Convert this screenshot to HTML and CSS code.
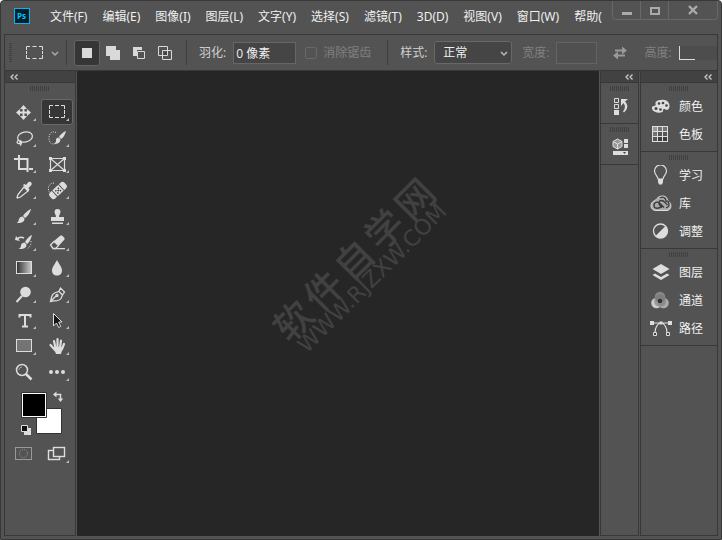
FILE: index.html
```html
<!DOCTYPE html>
<html lang="zh-CN">
<head>
<meta charset="utf-8">
<title>Photoshop</title>
<link rel="stylesheet" href="styles.css">
</head>
<body>
<div class="window">
  <header class="titlebar">
    <svg class="logo" width="16" height="16" viewBox="0 0 16 16"><rect x=".5" y=".5" width="15" height="15" fill="#001d2b" stroke="#00b9f2"/><text class="logo-text" x="3" y="11">Ps</text></svg>
    <nav class="menu">
      <button>文件(F)</button><button>编辑(E)</button><button>图像(I)</button><button>图层(L)</button><button>文字(Y)</button><button>选择(S)</button><button>滤镜(T)</button><button>3D(D)</button><button>视图(V)</button><button>窗口(W)</button><button>帮助(</button>
    </nav>
    <div class="controls">
      <button aria-label="最小化"><svg width="12" height="12" viewBox="0 0 12 12"><path d="M1 9.500h10" stroke="#aaa" stroke-width="3"/></svg></button>
      <button aria-label="最大化"><svg width="12" height="12" viewBox="0 0 12 12"><path d="M2 4h8v6H2z" fill="none" stroke="#aaa" stroke-width="2"/></svg></button>
      <button class="close" aria-label="关闭"><svg width="12" height="12" viewBox="0 0 12 12"><path d="M2 2l8 8M10 2l-8 8" stroke="#aaa" stroke-width="2.400"/></svg></button>
    </div>
  </header>

  <form class="options">
    <span class="grip-v"></span>
    <button type="button" class="preset" aria-label="矩形选框工具"><svg width="34" height="16" viewBox="0 0 34 16" fill="none"><path d="M.5 5V1.500H4M6.500 1.500h4M13 1.500h3.500V5M16.500 6v3M16.500 10v3.500H13M10.500 13.500h-4M4 13.500H.5V10M.5 6v3" stroke="#ddd"/><path d="M26 7l3 3 3-3" stroke="#aaa" stroke-width="1.500"/></svg></button>
    <span class="divider"></span>
    <div class="modes">
      <button type="button" class="mode active" aria-label="新选区"><svg width="16" height="16" viewBox="0 0 16 16"><path d="M3 3h10v10H3z" fill="#d9d9d9"/></svg></button>
      <button type="button" class="mode" aria-label="添加到选区"><svg width="16" height="16" viewBox="0 0 16 16"><path d="M1 1h10v4h4v10H5v-4H1z" fill="#d9d9d9"/></svg></button>
      <button type="button" class="mode" aria-label="从选区减去"><svg width="16" height="16" viewBox="0 0 16 16"><path d="M2 2h9v3H6v6H2z" fill="#d9d9d9"/><path d="M6.500 6.500h7v7h-7z" fill="none" stroke="#d9d9d9"/></svg></button>
      <button type="button" class="mode" aria-label="与选区交叉"><svg width="16" height="16" viewBox="0 0 16 16"><path d="M1.500 1.500h9v9h-9zM5.500 5.500h9v9h-9z" fill="none" stroke="#d9d9d9"/><path d="M7 7h3v3H7z" fill="#444"/></svg></button>
    </div>
    <span class="divider"></span>
    <label class="field feather">羽化:<input type="text" value="0 像素"></label>
    <label class="check off"><input type="checkbox" disabled>消除锯齿</label>
    <span class="divider"></span>
    <label class="field style">样式:<span class="select"><select><option>正常</option></select><svg width="8" height="6" viewBox="0 0 8 6"><path d="M1 1l3 3 3-3" fill="none" stroke="#bbb" stroke-width="1.500"/></svg></span></label>
    <label class="field size off">宽度:<input type="text" disabled></label>
    <button type="button" class="swap" aria-label="高度和宽度互换"><svg width="14" height="14" viewBox="0 0 14 14"><path d="M2 3.500h7V.5l5 4-5 4v-3H2zM12 10.500H5v3l-5-4 5-4v3h7z" fill="#999"/></svg></button>
    <label class="field height off">高度:<input type="text" disabled></label>
  </form>

  <div class="workspace">
    <aside class="panel tools">
      <div class="head left"><svg width="8" height="6" viewBox="0 0 8 6"><path d="M3.500 .5L1 3l2.500 2.500M7.500 .5L5 3l2.500 2.500" fill="none" stroke="#ccc" stroke-width="1.300"/></svg></div>
      <div class="grip"></div>
      <div class="toolgrid">
        <button class="tool" aria-label="移动"><svg viewBox="0 0 32 26"><path d="M15.500 8v11M10 13.500h11" stroke="#ddd" stroke-width="1.800"/><path d="M15.500 6l3.500 4h-7zM15.500 21l3.500-4h-7zM8 13.500l4-3.500v7zM23 13.500l-4-3.500v7z" fill="#ddd"/></svg></button>
        <button class="tool active" aria-label="矩形选框"><svg viewBox="0 0 32 26"><path d="M8.500 10V6.500H12M14 6.500h4M20 6.500h3.500V10M23.500 11v4M23.500 16v2.500H20M18 18.500h-4M12 18.500H8.500V16M8.500 11v4" fill="none" stroke="#ddd"/></svg></button>
        <button class="tool" aria-label="套索"><svg viewBox="0 0 32 26" fill="none" stroke="#ddd" stroke-width="1.300"><ellipse cx="17" cy="12" rx="7.500" ry="5" transform="rotate(-12 17 12)"/><path d="M11 15c-3 1-2 4 0 3.500s2.500-2.500.5-3M13 16c1 2 .5 3-1 4.500"/></svg></button>
        <button class="tool" aria-label="快速选择"><svg viewBox="0 0 32 26"><path d="M15 7.500c-4-2-7 1-7 5.500s2 7 7 5.500" fill="none" stroke="#ddd" stroke-dasharray="1 1.300"/><path d="M25 6c-1 4-3 7-5 8l-2-2c1-2 4-5 7-6zM17.500 12.500l2 2c0 3-3 5-6.500 4 2-1 2-2 2-3.500s1-2.500 2.500-2.500z" fill="#ddd"/></svg></button>
        <button class="tool" aria-label="裁剪"><svg viewBox="0 0 32 26"><path d="M6 8h13.500v9M11 4v14h9M19.500 15v6M21 18h4" fill="none" stroke="#ddd" stroke-width="2"/></svg></button>
        <button class="tool" aria-label="图框"><svg viewBox="0 0 32 26"><path d="M9.500 7.500h14v12h-14zM9.500 7.500l14 12M23.500 7.500l-14 12" fill="none" stroke="#ddd" stroke-width="1.200"/><path d="M8 6h3v3H8zM22 6h3v3h-3zM8 18h3v3H8zM22 18h3v3h-3z" fill="#ddd"/></svg></button>
        <button class="tool" aria-label="吸管"><svg viewBox="0 0 32 26"><path d="M16 10l4 4-7.500 6-3 1-.5-.5 1-3z" fill="#535353" stroke="#ddd" stroke-width="1.300"/><path d="M15 8l1.500-1 1.500 1 2-2.500c1-1 3-.8 3.500.5.600 1 0 2-.8 2.800L20.500 11l1 2-1.500 1.500z" fill="#ddd"/></svg></button>
        <button class="tool" aria-label="修复画笔"><svg viewBox="0 0 32 26"><path d="M13 6c-3 0-6 2-5.500 6 0 1.500.5 3 1.500 4" fill="none" stroke="#ddd" stroke-dasharray="1 1.300"/><g transform="rotate(-43 17 13.500)"><rect x="7" y="9.500" width="20" height="8" rx="2.500" fill="#ddd"/><path d="M12.500 9v9M21.500 9v9" stroke="#535353"/><path d="M14.500 11.500h1.500v1.500h-1.500zM18 11.500h1.500v1.500H18zM16.300 13h1.500v1.500h-1.500zM14.500 14.500h1.500v1.500h-1.500zM18 14.500h1.500v1.500H18z" fill="#444"/></g></svg></button>
        <button class="tool" aria-label="画笔"><svg viewBox="0 0 32 26"><path d="M23 6c-1 4-4 8-6 9l-2-2c1-2 5-6 8-7zM14.500 13.500l2 2c0 4-4 5-8 4.500 2-1 2-2 2.500-4 .5-1.500 2-2.500 3.500-2.500z" fill="#ddd"/></svg></button>
        <button class="tool" aria-label="仿制图章"><svg viewBox="0 0 32 26"><path d="M16.500 6a3 3 0 013 3c0 1.500-1.500 2.500-1.500 5h5v4H10v-4h5c0-2.500-1.500-3.500-1.500-5a3 3 0 013-3zM11 19.500h11V21H11z" fill="#ddd"/></svg></button>
        <button class="tool" aria-label="历史记录画笔"><svg viewBox="0 0 32 26"><path d="M24 6c-1 4-3 8-5 9l-2-2c1-2 4-6 7-7zM16.500 13.500l2 2c0 4-4 5-8 4.500 2-1 2.500-2 2.500-4 .5-1.500 2-2.500 3.500-2.500z" fill="#ddd"/><path d="M9 10c2-2 5-2 7-1" fill="none" stroke="#ddd" stroke-width="1.500"/><path d="M7 11l1-4 4 5z" fill="#ddd"/><path d="M23 12c0 4-1 6-4 8" fill="none" stroke="#ddd" stroke-dasharray="1 1.500"/></svg></button>
        <button class="tool" aria-label="橡皮擦"><svg viewBox="0 0 32 26"><path d="M9.500 16L13 12.500l4.500 4-3 3H12z" fill="none" stroke="#ddd" stroke-width="1.300"/><path d="M13 12l6.500-5.500h1.500l2.500 2.500v1.500L17.500 17zM13 19h11v1.300H13z" fill="#ddd"/></svg></button>
        <button class="tool" aria-label="渐变"><svg viewBox="0 0 32 26"><defs><linearGradient id="gr"><stop stop-color="#303030"/><stop offset="1" stop-color="#ccc"/></linearGradient></defs><rect x="8.500" y="6.500" width="15" height="12" fill="url(#gr)" stroke="#ddd"/></svg></button>
        <button class="tool" aria-label="模糊"><svg viewBox="0 0 32 26"><path d="M16 5c2 4 5 7 5 10.500 0 3-2 5-5 5s-5-2-5-5C11 12 14 9 16 5z" fill="#ddd"/></svg></button>
        <button class="tool" aria-label="减淡"><svg viewBox="0 0 32 26"><circle cx="17.500" cy="11" r="5.300" fill="#ddd"/><path d="M14 15l-5.500 6" stroke="#ddd" stroke-width="2"/></svg></button>
        <button class="tool" aria-label="钢笔"><svg viewBox="0 0 32 26" fill="none" stroke="#ddd" stroke-width="1.300"><path d="M9.500 20.500c1-4 1-7 4-8.500l4.500-1.500 3.500 3.500-1.500 3.500c-2 3-6 2-10.500 3zM18 10l1.500-3 4 4L21.500 14M10 20l5-5"/><circle cx="16" cy="14.500" r="1"/></svg></button>
        <button class="tool" aria-label="文字"><svg viewBox="0 0 32 26"><path d="M11.500 10.500V8h11v2.500M17 7v12M14 19.500h6" fill="none" stroke="#ddd" stroke-width="2"/></svg></button>
        <button class="tool" aria-label="路径选择"><svg viewBox="0 0 32 26"><path d="M12.500 6.500v12.500l3-3 2.200 4.500 2-1-2-4.500H21z" fill="#161616" stroke="#ddd"/></svg></button>
        <button class="tool" aria-label="矩形"><svg viewBox="0 0 32 26"><rect x="8.500" y="6.500" width="15" height="12" fill="#747474" stroke="#ddd"/></svg></button>
        <button class="tool" aria-label="抓手"><svg viewBox="0 0 32 26"><path d="M9.500 12l4.500 5M13 8l1.500 7M16.500 6v9M20 7.500L19 15M23 11l-2 5" stroke="#ddd" stroke-width="2.200" stroke-linecap="round"/><path d="M12 14h10c0 3-1.500 4-2 7h-5c-.5-2-2-4-3-7z" fill="#ddd"/></svg></button>
        <button class="tool plain" aria-label="缩放"><svg viewBox="0 0 32 26"><circle cx="14" cy="11" r="5.500" fill="none" stroke="#ddd" stroke-width="1.500"/><path d="M11 11c0-2 1.500-3 3-3" fill="none" stroke="#aaa"/><path d="M18 15l5.500 5.500" stroke="#ddd" stroke-width="2.500"/></svg></button>
        <button class="tool" aria-label="更多"><svg viewBox="0 0 32 26" fill="#ddd"><circle cx="10" cy="13" r="2"/><circle cx="16" cy="13" r="2"/><circle cx="22" cy="13" r="2"/></svg></button>
      </div>
      <svg class="swatches" viewBox="0 0 70 56" width="70" height="56"><path d="M31.500 23.500h25v25h-25z" fill="#fff" stroke="#333"/><path d="M16.500 7.500h25v25h-25z" fill="#fff" stroke="#333"/><path d="M18 9h22v22H18z"/><path d="M51 9.500h4.500V15" fill="none" stroke="#ddd" stroke-width="1.500"/><path d="M48 9.500l3.500-3v6zM55.500 17l-2.700-3.500h5.400z" fill="#ddd"/><path d="M19 43h7v7h-7z" fill="#ddd"/><path d="M16.500 40.500h6v6h-6z" fill="#111" stroke="#ddd"/></svg>
      <div class="toolgrid">
        <button class="tool plain" aria-label="快速蒙版"><svg viewBox="0 0 32 26" fill="none" stroke="#999"><rect x="7.500" y="6.500" width="16" height="12"/><circle cx="15.500" cy="12.500" r="4" stroke-dasharray="1 1.100"/></svg></button>
        <button class="tool" aria-label="屏幕模式"><svg viewBox="0 0 32 26" fill="#535353" stroke="#ddd" stroke-width="1.400"><rect x="7.500" y="9.500" width="11" height="9"/><rect x="12.500" y="6.500" width="11" height="9"/></svg></button>
      </div>
    </aside>

    <main class="canvas">
      <div class="watermark">
        <div class="mark-name"><span>软</span><span>件</span><span>自</span><span>学</span><span>网</span></div>
        <div class="mark-url">WWW.RJZXW.COM</div>
      </div>
    </main>

    <aside class="panel dock-icons">
      <div class="head"><svg width="8" height="6" viewBox="0 0 8 6"><path d="M3.500 .5L1 3l2.500 2.500M7.500 .5L5 3l2.500 2.500" fill="none" stroke="#ccc" stroke-width="1.300"/></svg></div>
      <section class="group"><div class="grip"></div><button class="item" aria-label="历史记录"><svg width="20" height="20" viewBox="0 0 20 20"><path d="M4.500 2.500h4v4h-4zM4.500 8.500h4v4h-4z" fill="none" stroke="#ddd"/><path d="M4 14h5v5H4z" fill="#ddd"/><path d="M11 3h7l-3 2.500c3 3 3.500 7-1 11l-1-1c2.500-3 2.500-6 .5-8.500L11 10z" fill="#ddd"/></svg></button></section>
      <section class="group"><div class="grip"></div><button class="item" aria-label="属性"><svg width="20" height="20" viewBox="0 0 20 20"><path d="M7.500 2L12 4.500v5L7.500 12 3 9.500v-5z" fill="#999" stroke="#ddd"/><path d="M3 4.500L7.500 7 12 4.500M7.500 7v5" fill="none" stroke="#ddd"/><path d="M14 2h4v4h-4zM14 7h4v4h-4zM3 14h15v4H3z" fill="#ddd"/><path d="M13 15h3l-1.500 2z" fill="#444"/></svg></button></section>
    </aside>

    <aside class="panel dock-labels">
      <div class="head"><svg width="8" height="6" viewBox="0 0 8 6"><path d="M3.500 .5L1 3l2.500 2.500M7.500 .5L5 3l2.500 2.500" fill="none" stroke="#ccc" stroke-width="1.300"/></svg></div>
      <section class="group"><div class="grip"></div>
        <button class="item"><svg width="22" height="20" viewBox="0 0 22 20"><path d="M11 4c6-1 9 3 8.500 7-.5 3-3 3.500-4 2.500-1.500-1-3 0-2.500 1.500.5 2-9 3-11-2-.5-2 .5-3 2-3s2-1 1.500-2.500C5 5.500 8 4 11 4z" fill="#ddd"/><g fill="#444"><circle cx="9" cy="7.500" r="1.300"/><circle cx="13" cy="7" r="1.300"/><circle cx="16.500" cy="9.500" r="1.300"/><circle cx="6" cy="12.500" r="1.500"/><circle cx="10.500" cy="13.500" r="1.300"/></g></svg><span>颜色</span></button>
        <button class="item"><svg width="22" height="20" viewBox="0 0 22 20"><path d="M2 2h16v16H2z" fill="#ddd"/><path d="M3 3h4v4H3z" fill="#999"/><path d="M8 3h4v4H8zM13 3h4v4h-4zM3 8h4v4H3z" fill="#737373"/><path d="M8 8h4v4H8zM13 8h4v4h-4zM3 13h4v4H3z" fill="#555"/><path d="M8 13h4v4H8zM13 13h4v4h-4z" fill="#3c3c3c"/></svg><span>色板</span></button>
      </section>
      <section class="group"><div class="grip"></div>
        <button class="item"><svg width="22" height="20" viewBox="0 0 22 20"><path d="M8 14c0-3-3.500-4-3.500-8a6 6 0 0112 0c0 4-3.500 5-3.500 8z" fill="none" stroke="#ddd" stroke-width="1.200"/><path d="M8 14h5v3l-1 2.500H9L8 17z" fill="#ddd"/></svg><span>学习</span></button>
        <button class="item"><svg width="22" height="20" viewBox="0 0 22 20"><path d="M6 17.500c-6 0-7-8-1-10C7 6 8 3 12.500 3c4 0 5 3 5.500 5 4 2 4 9-1 9.500z" fill="#aaa" stroke="#ddd"/><path d="M12 14.500l-2-2c-2-2-1-5 1.500-5s4 2.500 6 4.500M11.500 13c-2 3-7 3-7.500 0-.5-4 4-5 6-2.500l4 4" fill="none" stroke="#3c3c3c" stroke-width="1.400"/><path d="M10 5c3-2 6 0 6 3 4 0 4 7 0 6.500" fill="none" stroke="#3c3c3c" stroke-width="1.300"/></svg><span>库</span></button>
        <button class="item"><svg width="22" height="20" viewBox="0 0 22 20"><circle cx="10.500" cy="10" r="7" fill="none" stroke="#ddd" stroke-width="1.300"/><path d="M15.500 5l-10 10a7 7 0 0010-10z" fill="#ddd"/></svg><span>调整</span></button>
      </section>
      <section class="group"><div class="grip"></div>
        <button class="item"><svg width="22" height="20" viewBox="0 0 22 20"><path d="M11 2l8.500 5-8.500 5-8.500-5zM2.500 13L5 11.500l6 3.500 6-3.500 2.500 1.500-8.500 5z" fill="#ddd"/></svg><span>图层</span></button>
        <button class="item"><svg width="22" height="20" viewBox="0 0 22 20"><circle cx="6.500" cy="13" r="5.300" fill="#ccc"/><circle cx="13.500" cy="13" r="5.300" fill="#aaa"/><circle cx="10" cy="7" r="5.300" fill="#888"/><path d="M4.800 8.500a5.300 5.300 0 0110.400 0 5.300 5.300 0 01-5.200 8 5.300 5.300 0 01-5.200-8z" fill="#777" opacity=".6"/><circle cx="10" cy="11" r="2.300" fill="#333"/></svg><span>通道</span></button>
        <button class="item"><svg width="22" height="20" viewBox="0 0 22 20"><path d="M2 5h18M5 15c0-6 3-10 6-10s6 4 6 10" fill="none" stroke="#ddd" stroke-width="1.200"/><path d="M0 3h4v4H0zM9.500 3.500h3v3h-3zM18 3h4v4h-4z" fill="#ddd"/><path d="M3.500 14.500h3v3h-3zM16.500 14.500h3v3h-3z" fill="#444" stroke="#ddd"/></svg><span>路径</span></button>
      </section>
    </aside>
  </div>
</div>
</body>
</html>
```
FILE: styles.css
```css
* { box-sizing: border-box; }
body {
  margin: 0;
  background: #fff;
  color: #f0f0f0;
  font: 12px/16px "Open Sans", "Noto Sans CJK SC", sans-serif;
}
button, input, select {
  margin: 0;
  padding: 0;
  border: 0;
  background: none;
  color: inherit;
  font: inherit;
}
svg { display: block; flex: none; }

.window {
  display: flex;
  flex-direction: column;
  height: 100vh;
  padding: 0 3px 3px;
  border: 1px solid #383838;
  border-radius: 4px 4px 0 0;
  background: #535353;
  overflow: hidden;
}

.titlebar { display: flex; align-items: flex-start; height: 33px; flex: none; padding-left: 10px; }
.logo { margin-top: 7px; }
.logo-text { font: bold 8px "Open Sans", sans-serif; fill: #00c8ff; }
.menu { display: flex; gap: 15px; margin: 8px 0 0 20px; flex: 1; min-width: 0; white-space: nowrap; }
.menu { font-family: "Noto Sans", "Noto Sans CJK SC", sans-serif; }
.controls {
  display: flex;
  height: 19px;
  margin-right: 0;
  border: 1px solid #686868;
  border-top: 0;
  border-radius: 0 0 4px 4px;
}
.controls button { display: flex; align-items: center; justify-content: center; width: 28px; border-right: 1px solid #686868; }
.controls .close { width: 48px; border-right: 0; }

.options {
  display: flex;
  align-items: center;
  height: 37px;
  flex: none;
  border: 1px solid #383838;
  color: #d0d0d0;
  overflow: hidden;
  white-space: nowrap;
}
.grip-v { flex: none; width: 3px; height: 20px; margin-left: 4px; background: repeating-linear-gradient(#404040 0 1px, #535353 1px 2px); }
.preset { margin: 0 6px 0 14px; }
.divider { flex: none; width: 1px; height: 25px; background: #3d3d3d; }
.modes { display: flex; margin: 0 8px 0 7px; }
.mode { display: flex; align-items: center; justify-content: center; width: 26px; height: 26px; border: 1px solid transparent; border-radius: 3px; }
.mode.active { background: #363636; border-color: #646464; }
.field { display: flex; align-items: center; gap: 7px; flex: none; }
.field input { width: 41px; height: 22px; border: 1px solid #666; background: #454545; }
.feather { margin-left: 12px; }
.feather input { width: 63px; padding-left: 2px; color: #f0f0f0; }
.off { color: #808080; }
.check { display: flex; align-items: center; gap: 6px; margin: 0 16px 0 9px; }
.check input { appearance: none; width: 12px; height: 12px; border: 1px solid #686868; border-radius: 2px; }
.style { margin-left: 12px; }
.select { position: relative; display: flex; }
.select select { appearance: none; width: 78px; height: 23px; padding-left: 8px; border: 1px solid #686868; border-radius: 3px; background: #454545; color: #f0f0f0; }
.select svg { position: absolute; right: 4px; top: 10px; pointer-events: none; }
.size { margin-left: 10px; }
.size input, .size input:disabled { border-color: #646464; background: #505050; }
.swap { margin: 0 17px 0 16px; }
.height { flex: 1; }
.height input { flex: 1; min-width: 0; height: 14px; border: 0; border-left: 1px solid #ddd; background: linear-gradient(90deg, #ddd 15px, transparent 15px) bottom left / 100% 1px no-repeat, #4d4d4d; }

.workspace { display: flex; flex: 1; min-height: 0; }
.panel { flex: none; border: 1px solid #383838; border-top: 0; }
.tools { width: 72px; }
.dock-icons { width: 39px; margin-right: 1px; }
.dock-labels { width: 78px; }
.head { display: flex; align-items: center; justify-content: flex-end; height: 12px; padding: 0 5px; background: #424242; border-bottom: 1px solid #383838; }
.head.left { justify-content: flex-start; }
.grip { width: 20px; height: 5px; margin: 3px auto 1px; background: repeating-linear-gradient(90deg, #404040 0 1px, #535353 1px 2px); }
.tools .grip { margin-bottom: 8px; }
.toolgrid { display: grid; grid-template-columns: 32px 32px; column-gap: 1px; grid-auto-rows: 26px; padding-left: 3px; }
.tool { position: relative; }
.tool svg { width: 32px; height: 26px; }
.tool.active::before { content: ""; position: absolute; inset: 0; border: 1px solid #686868; border-radius: 3px; background: #363636; }
.tool.active svg { position: relative; }
.tool::after { content: ""; position: absolute; right: 4px; bottom: 4px; width: 3px; height: 3px; background: #bbb; clip-path: polygon(100% 0, 100% 100%, 0 100%); }
.tool.plain::after { display: none; }

.canvas { display: flex; align-items: center; justify-content: center; flex: 1; min-width: 0; margin: 0 1px; background: #262626; overflow: hidden; }
.watermark { display: flex; flex-direction: column; align-items: center; margin: 0 0 77px 43px; color: #414141; transform: rotate(-45deg); white-space: nowrap; }
.mark-name { display: flex; gap: 5px; font-size: 38px; line-height: 38px; font-weight: 500; }
.mark-url { font: 22px/16px "DejaVu Sans", sans-serif; }

.group { border-bottom: 1px solid #383838; padding: 3px 0; }
.group .grip { margin-top: 0; }
.item { display: flex; align-items: center; justify-content: center; width: 100%; height: 28px; }
.dock-labels .item { justify-content: flex-start; gap: 7px; padding-left: 9px; }
.dock-labels .item span { padding-top: 2px; }
```
